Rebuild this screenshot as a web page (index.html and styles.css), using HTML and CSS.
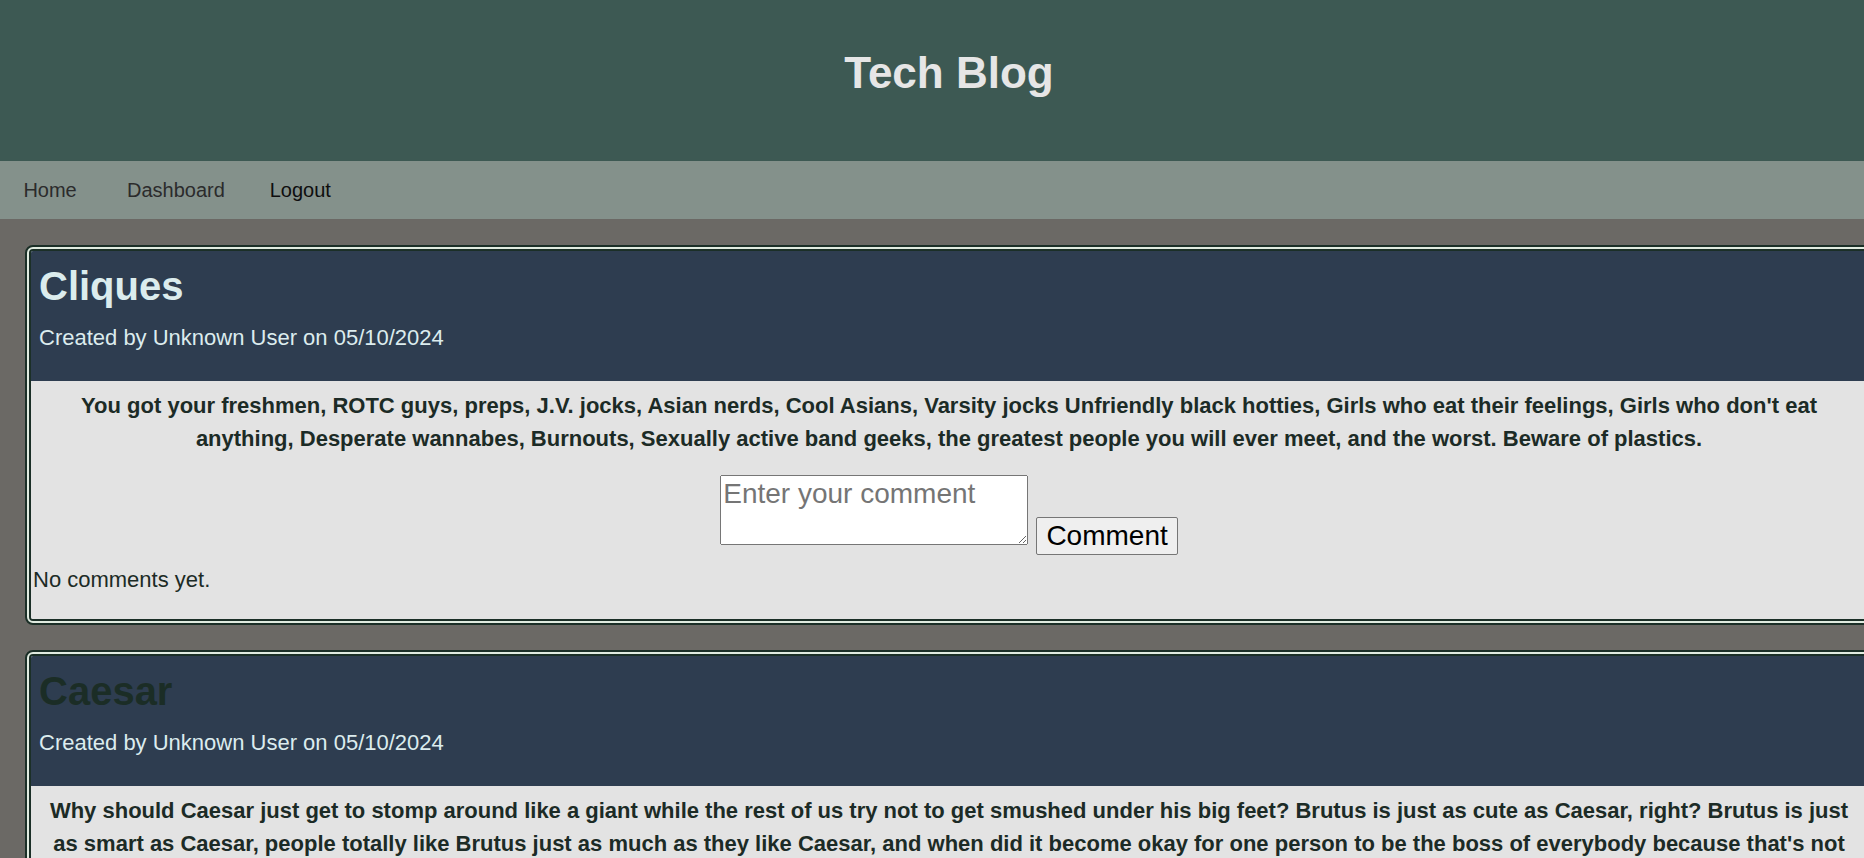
FILE: index.html
```html
<!DOCTYPE html>
<html lang="en">
<head>
<meta charset="utf-8">
<title>Tech Blog</title>
<link rel="stylesheet" href="styles.css">
</head>
<body>
<div class="page">
  <header class="site-header">
    <h1 class="site-title">Tech Blog</h1>
  </header>
  <nav class="site-nav">
    <a class="nav-link" href="#">Home</a>
    <a class="nav-link" href="#">Dashboard</a>
    <a class="nav-link nav-link--strong" href="#">Logout</a>
  </nav>
  <main class="posts">
    <article class="post">
      <div class="post-head">
        <h2 class="post-title">Cliques</h2>
        <p class="post-meta">Created by Unknown User on 05/10/2024</p>
      </div>
      <div class="post-body">
        <p class="post-text">You got your freshmen, ROTC guys, preps, J.V. jocks, Asian nerds, Cool Asians, Varsity jocks Unfriendly black hotties, Girls who eat their feelings, Girls who don't eat anything, Desperate wannabes, Burnouts, Sexually active band geeks, the greatest people you will ever meet, and the worst. Beware of plastics.</p>
        <form class="comment-form"><textarea class="comment-input" placeholder="Enter your comment"></textarea> <button class="comment-btn" type="button">Comment</button></form>
        <p class="comments">No comments yet.</p>
      </div>
    </article>
    <article class="post">
      <div class="post-head">
        <h2 class="post-title post-title--dark">Caesar</h2>
        <p class="post-meta">Created by Unknown User on 05/10/2024</p>
      </div>
      <div class="post-body">
        <p class="post-text">Why should Caesar just get to stomp around like a giant while the rest of us try not to get smushed under his big feet? Brutus is just as cute as Caesar, right? Brutus is just as smart as Caesar, people totally like Brutus just as much as they like Caesar, and when did it become okay for one person to be the boss of everybody because that's not what Rome is about! We should totally just stab Caesar!</p>
        <form class="comment-form"><textarea class="comment-input" placeholder="Enter your comment"></textarea> <button class="comment-btn" type="button">Comment</button></form>
        <p class="comments">No comments yet.</p>
      </div>
    </article>
  </main>
</div>
</body>
</html>
```
FILE: styles.css
```css
html {
  overflow: hidden;
}

body {
  margin: 0;
  font-family: "Liberation Sans", Arial, sans-serif;
  background: #6b6965;
}

.page {
  width: 1898px;
}

.site-header {
  height: 161px;
  box-sizing: border-box;
  padding-top: 48px;
  background: #3d5953;
  text-align: center;
}

.site-title {
  margin: 0;
  font-size: 44px;
  font-weight: bold;
  line-height: normal;
  color: #e6e6e6;
}

.site-nav {
  display: flex;
  align-items: center;
  height: 58px;
  padding-left: 1px;
  background: #84918b;
}

.nav-link {
  padding: 0 22.4px;
  font-size: 20px;
  color: #2b2b2b;
  text-decoration: none;
}

.nav-link:first-child {
  margin-right: 5.5px;
}

.nav-link--strong {
  color: #0e0e0e;
}

.posts {
  display: flex;
  flex-direction: column;
  gap: 25px;
  padding: 26px 25px 0;
}

.post {
  border: 6px double #1b2f27;
  border-radius: 8px;
  background: #e0ebe0;
  overflow: hidden;
}

.post-head {
  padding: 12.5px 8px 30px;
  background: #2e3d50;
}

.post-title {
  margin: 0 0 16.5px;
  font-size: 40px;
  font-weight: bold;
  line-height: normal;
  color: #dbeced;
}

.post-title--dark {
  color: #1b2d26;
}

.post-meta {
  margin: 0;
  font-size: 22px;
  line-height: normal;
  color: #dcecee;
}

.post-body {
  padding: 8px 0 23px;
  background: #e3e3e3;
  color: #1c2b26;
  font-size: 22px;
  line-height: 33px;
}

.post-text {
  margin: 0;
  padding: 0 8px;
  font-weight: bold;
  text-align: center;
}

.comment-form {
  margin: 20px 0 0;
  text-align: center;
}

.comment-input {
  width: 308px;
  height: 70px;
  box-sizing: border-box;
  font: 28px "Liberation Sans", Arial, sans-serif;
  vertical-align: baseline;
}

.comment-btn {
  margin-left: 2px;
  padding: 2px 9px;
  border: 1px solid #767676;
  border-radius: 2px;
  background: #efefef;
  color: #000;
  font: 28px "Liberation Sans", Arial, sans-serif;
}

.comments {
  margin: 8px 0 0;
  padding-left: 2px;
}
```
